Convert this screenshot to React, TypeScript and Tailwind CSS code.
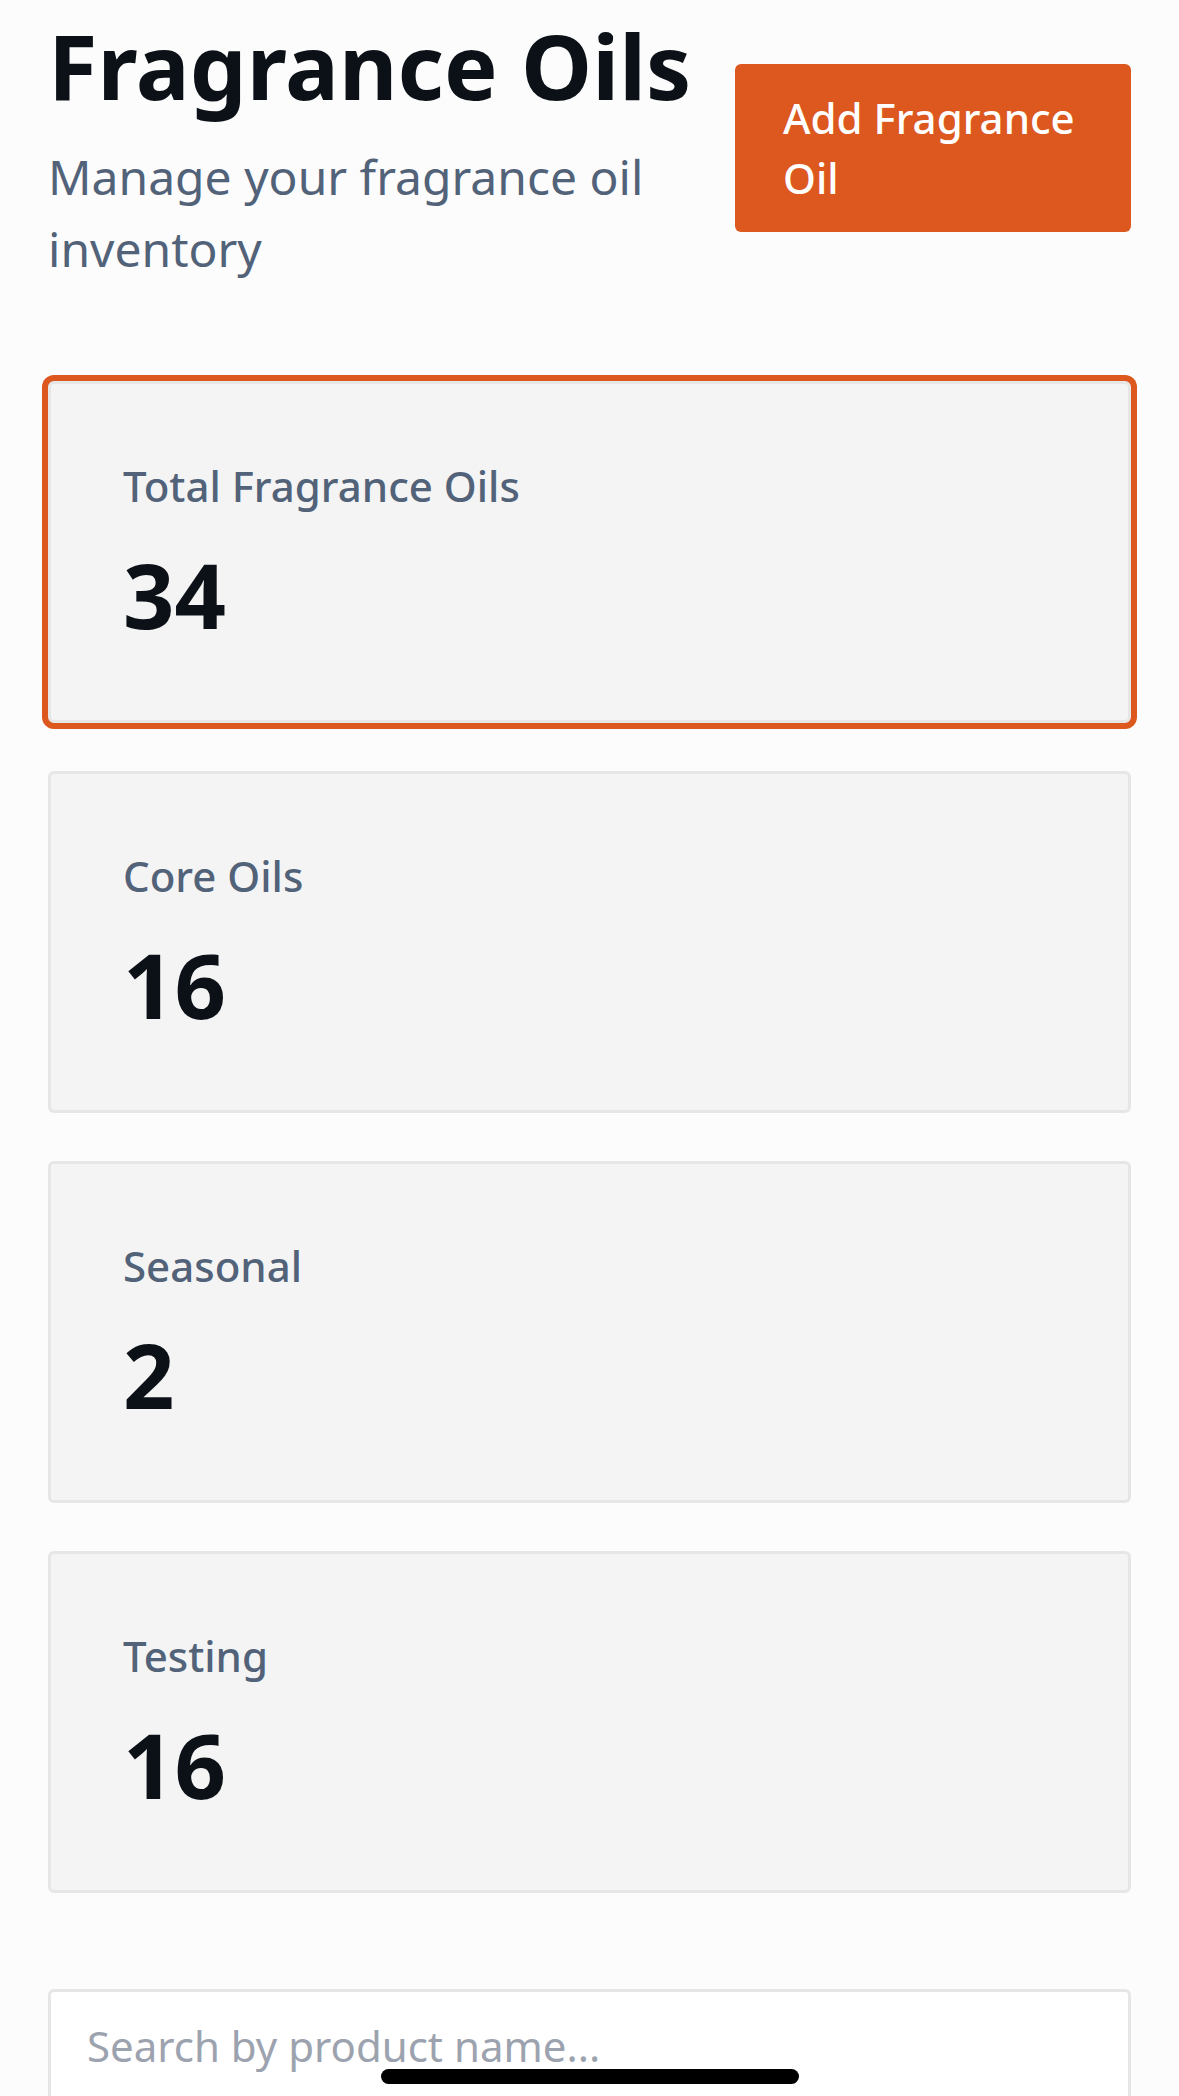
const stats = [
  { label: "Total Fragrance Oils", value: 34, active: true },
  { label: "Core Oils", value: 16, active: false },
  { label: "Seasonal", value: 2, active: false },
  { label: "Testing", value: 16, active: false },
];

function StatCard({ label, value, active }: { label: string; value: number; active: boolean }) {
  return (
    <div
      className={`rounded-[6px] border-[3px] border-[#e6e6e6] bg-[#f4f4f4] p-[72px] ${
        active ? "ring-[6px] ring-[#dc581e]" : ""
      }`}
    >
      <p className="text-[42px] leading-[60px] font-medium text-[#526279]">{label}</p>
      <p className="mt-[24px] text-[90px] leading-[108px] font-bold text-[#0c1118]">{value}</p>
    </div>
  );
}

export default function App() {
  return (
    <main className="relative min-h-screen bg-[#fcfcfc] px-[48px] pt-[11px] font-['Noto_Sans',sans-serif]">
      <div className="flex items-center justify-between gap-[48px]">
        <div className="min-w-0 flex-1">
          <h1 className="whitespace-nowrap text-[90px] leading-[108px] font-bold text-[#0c1118]">
            Fragrance Oils
          </h1>
          <p className="mt-[22px] text-[48px] leading-[72px] text-[#526279]">
            Manage your fragrance oil inventory
          </p>
        </div>
        <button
          type="button"
          className="w-[396px] shrink-0 rounded-[6px] bg-[#dc581e] px-[48px] py-[24px] text-left text-[42px] leading-[60px] font-medium text-white"
        >
          Add Fragrance Oil
        </button>
      </div>

      <div className="mt-[96px] flex flex-col gap-[48px]">
        {stats.map((s) => (
          <StatCard key={s.label} {...s} />
        ))}
      </div>

      <div className="mt-[96px] pb-[48px]">
        <input
          type="text"
          placeholder="Search by product name..."
          className="w-full rounded-[6px] border-[3px] border-[#e6e6e6] bg-white px-[36px] py-[24px] text-[42px] leading-[60px] text-[#0c1118] outline-none placeholder:text-[#9ca3af]"
        />
      </div>

      <div className="fixed bottom-[12px] left-1/2 h-[15px] w-[418px] -translate-x-1/2 rounded-full bg-black" />
    </main>
  );
}
